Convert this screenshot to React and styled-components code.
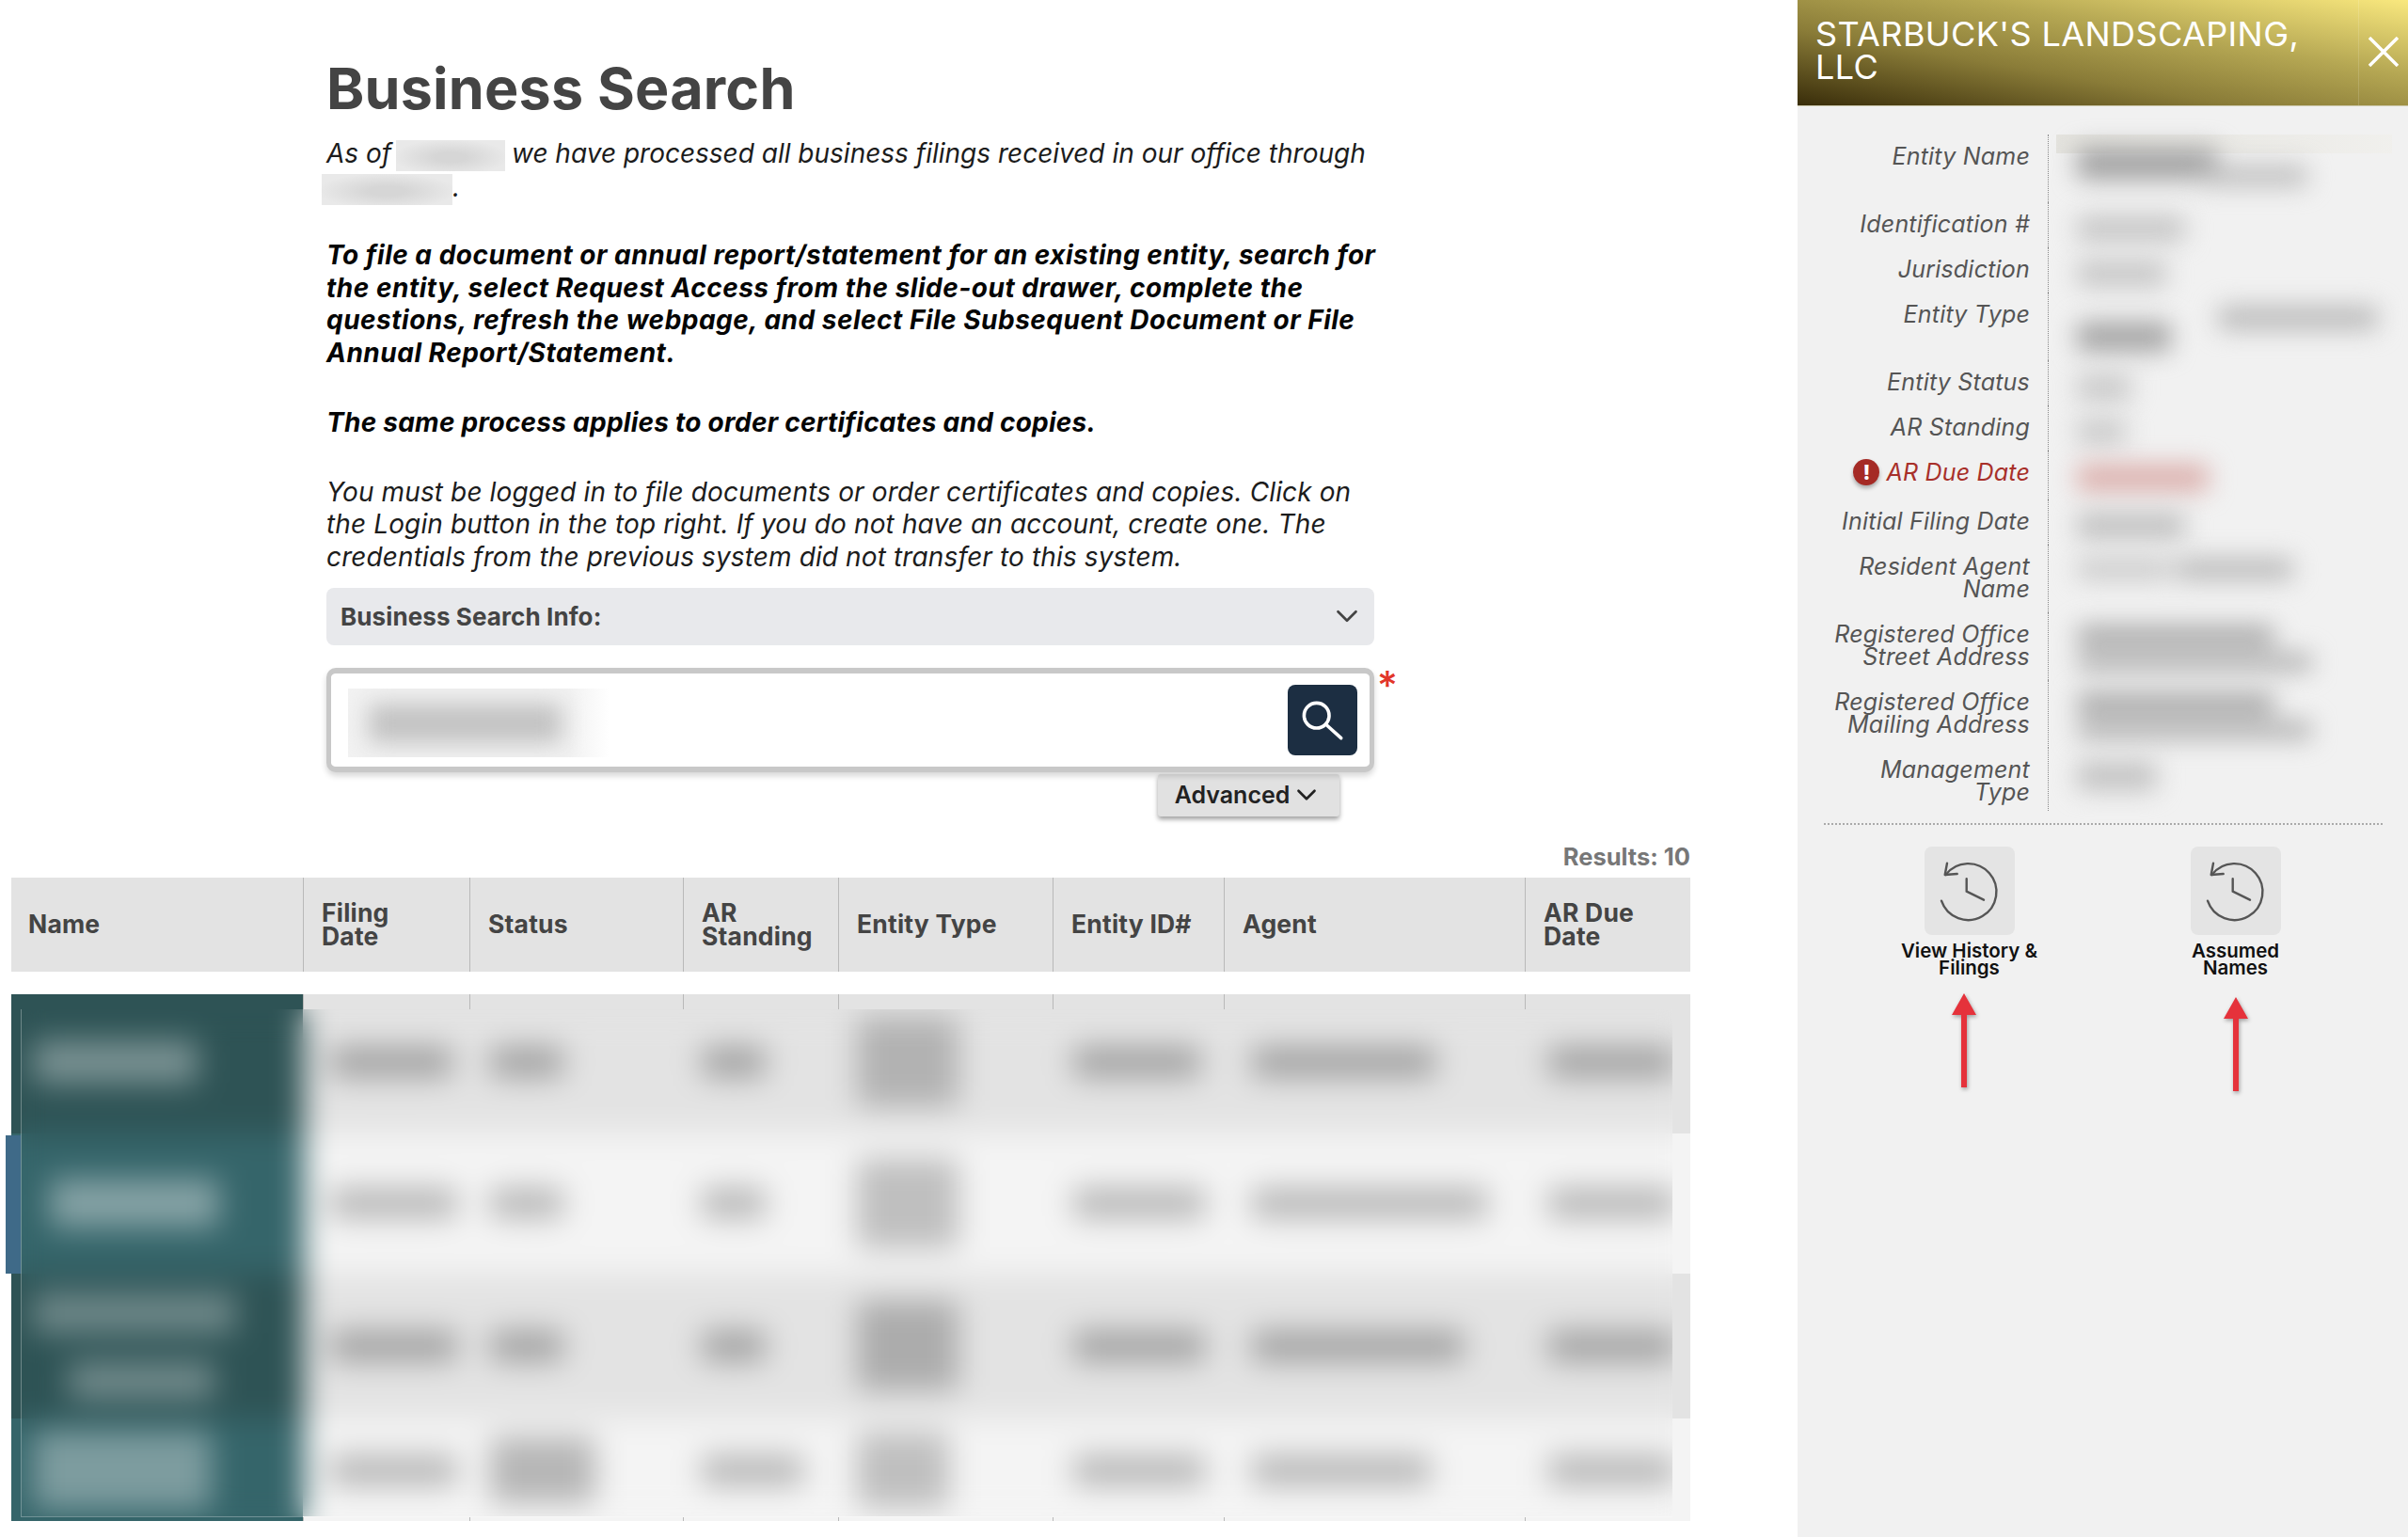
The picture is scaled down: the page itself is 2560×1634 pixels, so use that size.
import styled, { createGlobalStyle } from 'styled-components';
import { ChevronDown } from 'lucide-react';

const GlobalStyle = createGlobalStyle`
  html, body {
    margin: 0;
    padding: 0;
    background: #fff;
  }
  * {
    box-sizing: border-box;
  }
  body {
    font-family: Inter, "Open Sans", sans-serif;
  }
`;

const COLUMNS = '310px 177px 227px 165px 228px 182px 320px 176px';

const Page = styled.div`
  display: flex;
  width: 2560px;
  height: 1634px;
  overflow: hidden;
`;

const Main = styled.main`
  width: 1911px;
  flex: none;
  padding: 56px 0 0 12px;
`;

const Intro = styled.section`
  width: 1114px;
  margin-left: 335px;
`;

const Title = styled.h1`
  margin: 0 0 14px;
  font-size: 61px;
  line-height: 76px;
  font-weight: 650;
  letter-spacing: 0.2px;
  color: #444;
`;

const Para = styled.p`
  margin: 0 0 ${(p) => p.$gap || 39}px;
  font-size: 28px;
  line-height: 34.7px;
  font-style: italic;
  font-weight: ${(p) => (p.$bold ? 700 : 400)};
  letter-spacing: ${(p) => p.$spacing};
  color: ${(p) => (p.$bold ? '#050505' : '#1c1c1c')};
  white-space: nowrap;
`;

const Redacted = styled.span`
  display: inline-block;
  width: ${(p) => p.$w}px;
  height: 33px;
  margin: ${(p) => p.$margin};
  vertical-align: -9px;
  background: radial-gradient(ellipse at 50% 55%, #d6d6d6 20%, #e9e9e9 75%);
`;

const InfoBar = styled.div`
  display: flex;
  align-items: center;
  justify-content: space-between;
  height: 61px;
  margin-top: -24px;
  padding: 0 10px 0 15px;
  background: #e8e9ec;
  border-radius: 8px;
  font-size: 26px;
  font-weight: 700;
  letter-spacing: 0.1px;
  color: #444;
`;

const SearchRow = styled.div`
  position: relative;
  margin-top: 24px;
`;

const SearchBox = styled.div`
  display: flex;
  align-items: center;
  justify-content: space-between;
  height: 111px;
  padding: 0 13px 0 18px;
  background: #fff;
  border: 5px solid #c8c8c8;
  border-width: 6px 5px;
  border-radius: 10px;
  box-shadow: 0 4px 6px rgba(0, 0, 0, 0.16);
`;

const SearchValue = styled.div`
  width: 278px;
  height: 73px;
  margin-top: 6px;
  overflow: hidden;
  background: linear-gradient(90deg, #f2f2f2 85%, #fff);
`;

const SearchBlur = styled.div`
  width: 205px;
  height: 42px;
  margin: 16px 0 0 22px;
  background: #c2c2c2;
  filter: blur(12px);
`;

const SearchButton = styled.button`
  display: flex;
  width: 74px;
  height: 75px;
  padding: 0;
  border: 0;
  border-radius: 8px;
  background: #1c2e42;
`;

const Required = styled.span`
  position: absolute;
  top: -2px;
  left: 1117px;
  font-size: 42px;
  line-height: 42px;
  font-weight: 500;
  color: #e2352a;
`;

const AdvancedRow = styled.div`
  display: flex;
  justify-content: flex-end;
  margin: 2px 37px 0 0;
`;

const AdvancedButton = styled.div`
  display: flex;
  align-items: center;
  justify-content: center;
  gap: 1px;
  width: 193px;
  height: 45px;
  background: #e1e1e1;
  border-radius: 3px;
  box-shadow: 0 3px 5px rgba(0, 0, 0, 0.38);
  font-size: 25px;
  font-weight: 600;
  color: #222;
`;

const TableWrap = styled.section`
  width: 1785px;
  margin-top: 24px;
`;

const Results = styled.div`
  height: 40px;
  margin-bottom: 1px;
  text-align: right;
  font-size: 25.5px;
  line-height: 38px;
  font-weight: 700;
  color: #777;
`;

const HeadRow = styled.div`
  display: grid;
  grid-template-columns: ${COLUMNS};
  height: 100px;
  background: #e3e3e3;
`;

const HeadCell = styled.div`
  display: flex;
  align-items: center;
  padding-left: ${(p) => (p.$first ? 18 : 19)}px;
  border-left: ${(p) => (p.$first ? 0 : '1px solid #b9b9b9')};
  font-size: 26.5px;
  line-height: 25px;
  font-weight: 700;
  letter-spacing: 0.2px;
  color: #444;
`;

const HeadText = styled.span`
  max-width: ${(p) => (p.$wrap ? '130px' : 'none')};
`;

const Body = styled.div`
  position: relative;
  display: flex;
  flex-direction: column;
  height: 560px;
  margin-top: 24px;
  background:
    linear-gradient(180deg, #2e5355 0 148px, #35656a 148px 297px, #2e5355 297px 451px, #35656a 451px) left top / 310px 100% no-repeat,
    linear-gradient(180deg, #e3e3e3 0 148px, #f4f4f4 148px 297px, #e3e3e3 297px 451px, #f4f4f4 451px);
`;

const TickRow = styled.div`
  display: grid;
  flex: none;
  grid-template-columns: ${COLUMNS};
  height: ${(p) => p.$h}px;
`;

const Tick = styled.div`
  border-left: ${(p) => (p.$first ? 0 : '1px solid #b9b9b9')};
`;

const SelectedMark = styled.div`
  position: absolute;
  top: 150px;
  left: -6px;
  width: 16px;
  height: 147px;
  background: #3f6a88;
`;

const BlurClip = styled.div`
  flex: 1;
  min-height: 0;
  margin: 0 19px 0 10px;
  overflow: hidden;
  border-left: 1px solid rgba(255, 255, 255, 0.3);
  border-bottom: 1px solid rgba(255, 255, 255, 0.3);
`;

const BlurLayer = styled.div`
  margin-left: -10px;
  width: 1785px;
  filter: blur(16px);
`;

const DataRow = styled.div`
  display: grid;
  grid-template-columns: ${COLUMNS};
  height: ${(p) => p.$h}px;
  background: ${(p) => p.$bg};
`;

const DataCell = styled.div`
  display: flex;
  flex-direction: column;
  justify-content: center;
  align-items: flex-start;
  gap: 30px;
  padding: 0 0 ${(p) => p.$lift}px ${(p) => p.$pad}px;
  background: ${(p) => p.$bg || 'transparent'};
`;

const Smudge = styled.div`
  width: ${(p) => p.$w}px;
  height: ${(p) => p.$h}px;
  margin-left: ${(p) => p.$ml || 0}px;
  margin-top: ${(p) => p.$mt || 0}px;
  background: ${(p) => p.$c};
  border-radius: 6px;
`;

const Panel = styled.aside`
  width: 649px;
  flex: none;
  background: #f1f1f1;
`;

const PanelHeader = styled.header`
  display: flex;
  justify-content: space-between;
  height: 113px;
  padding: 19px 0 0 19px;
  background: linear-gradient(to top right, #392d0a 0%, #8a7c38 36%, #b5a753 64%, #f9e87e 100%);
  border-bottom: 1px solid #cfcbb0;
`;

const PanelTitle = styled.h2`
  margin: 0;
  font-size: 36px;
  line-height: 35px;
  font-weight: 400;
  letter-spacing: 0.4px;
  white-space: nowrap;
  color: #fff;
`;

const CloseButton = styled.div`
  display: flex;
  align-items: flex-start;
  justify-content: center;
  width: 53px;
  height: 112px;
  margin-top: -19px;
  padding-top: 39px;
  border-left: 1px solid rgba(255, 255, 255, 0.14);
`;

const DetailList = styled.dl`
  margin: 30px 17px 0 0;
`;

const DetailRow = styled.div`
  display: flex;
`;

const DetailLabel = styled.dt`
  display: flex;
  justify-content: flex-end;
  align-items: flex-start;
  gap: 7px;
  width: 267px;
  flex: none;
  padding: 11px 19px ${(p) => (p.$last ? 8 : p.$alert ? 15 : 13)}px 0;
  border-right: 1px dotted #888;
  text-align: right;
  font-size: 25px;
  line-height: 24px;
  font-style: italic;
  letter-spacing: 0.2px;
  white-space: nowrap;
  color: ${(p) => (p.$alert ? '#a8302a' : '#555')};
`;

const AlertDot = styled.span`
  display: flex;
  align-items: center;
  justify-content: center;
  width: 28px;
  height: 28px;
  margin-top: -2px;
  border-radius: 50%;
  background: #a52a25;
  box-shadow: 0 3px 4px rgba(0, 0, 0, 0.3);
  font-size: 22px;
  font-style: normal;
  font-weight: 800;
  color: #fff;
`;

const DetailValue = styled.dd`
  flex: 1;
  margin: 0 0 0 8px;
  padding: 14px 0 0 22px;
  background: ${(p) => (p.$tint ? 'linear-gradient(100deg, #e4e3de, rgba(240, 239, 234, 0.6)) top / 100% 20px no-repeat' : 'none')};
`;

const ValueBlur = styled.div`
  display: flex;
  flex-direction: column;
  gap: 7px;
  filter: blur(13px);
`;

const Divider = styled.div`
  margin: 13px 27px 0 28px;
  border-top: 2px dotted #aaa;
`;

const Actions = styled.div`
  display: grid;
  grid-template-columns: 283px 283px;
  margin: 23px 0 0 41px;
`;

const Action = styled.div`
  display: flex;
  flex-direction: column;
  align-items: center;
`;

const IconTile = styled.div`
  display: flex;
  width: 96px;
  height: 94px;
  background: #e4e4e4;
  border-radius: 8px;
`;

const ActionLabel = styled.div`
  margin-top: 8px;
  text-align: center;
  font-size: 20.5px;
  line-height: 18px;
  font-weight: 600;
  color: #111;
`;

const ArrowMark = styled.svg`
  margin: ${(p) => p.$top}px ${(p) => p.$shift}px 0 0;
  filter: drop-shadow(1px 2px 2px rgba(0, 0, 0, 0.35));
`;

const HEADERS = ['Name', 'Filing Date', 'Status', 'AR Standing', 'Entity Type', 'Entity ID#', 'Agent', 'AR Due Date'];

const ROWS = [
  {
    h: 132, lift: 20, bg: '#e3e3e3', teal: '#2e5355', tone: '#a0a0a0', typeTone: '#b2b2b2',
    name: [[175, 46, 12, 'rgba(255,255,255,.36)']],
    filing: 130, status: 78, standing: 68, type: 108, id: 135, agent: 195, due: 135,
  },
  {
    h: 149, lift: 0, bg: '#f4f4f4', teal: '#35656a', tone: '#b6b6b6', typeTone: '#bfbfbf',
    name: [[180, 52, 30, 'rgba(255,255,255,.4)']],
    filing: 135, status: 78, standing: 68, type: 108, id: 140, agent: 250, due: 135,
  },
  {
    h: 154, lift: 0, bg: '#e3e3e3', teal: '#2e5355', tone: '#a0a0a0', typeTone: '#acacac',
    name: [[215, 44, 12, 'rgba(255,255,255,.3)'], [155, 40, 50, 'rgba(255,255,255,.32)']],
    filing: 135, status: 78, standing: 68, type: 108, id: 140, agent: 225, due: 135,
  },
  {
    h: 110, lift: 0, bg: '#f4f4f4', teal: '#35656a', tone: '#b6b6b6', typeTone: '#bfbfbf',
    name: [[190, 84, 12, 'rgba(255,255,255,.36)']],
    filing: 135, status: 112, standing: 108, type: 98, id: 140, agent: 190, due: 135,
  },
];

const PADS = [0, 28, 21, 19, 19, 21, 29, 24];

// [width, height, colour, left offset, top offset]
const DETAILS = [
  { label: 'Entity Name', lines: [[150, 34, '#a2a2a2'], [115, 22, '#bebebe', 130, -22]], double: true, tint: true },
  { label: 'Identification #', lines: [[115, 28, '#c6c6c6']] },
  { label: 'Jurisdiction', lines: [[95, 28, '#c6c6c6']] },
  { label: 'Entity Type', lines: [[170, 26, '#bcbcbc', 150], [100, 32, '#a6a6a6', 0, -16]], double: true },
  { label: 'Entity Status', lines: [[58, 30, '#cacaca']] },
  { label: 'AR Standing', lines: [[52, 28, '#cacaca']] },
  { label: 'AR Due Date', lines: [[140, 30, '#dcb2af']], alert: true },
  { label: 'Initial Filing Date', lines: [[115, 28, '#c0c0c0']] },
  { label: ['Resident Agent', 'Name'], lines: [[100, 24, '#cccccc'], [125, 24, '#bcbcbc', 105, -31]] },
  { label: ['Registered Office', 'Street Address'], lines: [[210, 22, '#a8a8a8'], [250, 20, '#b2b2b2']] },
  { label: ['Registered Office', 'Mailing Address'], lines: [[210, 22, '#a4a4a4'], [250, 20, '#b2b2b2']] },
  { label: ['Management', 'Type'], lines: [[85, 32, '#c4c4c4']], last: true },
];

const HistoryIcon = () => (
  <svg width="96" height="94" viewBox="0 0 96 94" fill="none" stroke="#555" strokeWidth="2.4" strokeLinecap="round" strokeLinejoin="round">
    <path d="M18 57.7A30 30 0 1 0 22.5 30" />
    <path d="M24 17.7L21.7 30L34.7 29" />
    <path d="M44.7 34.3V47.7L63 56.7" />
  </svg>
);

const SearchGlyph = () => (
  <svg width="74" height="75" viewBox="0 0 74 75" fill="none" stroke="#fff" strokeWidth="3.6" strokeLinecap="round">
    <circle cx="30.7" cy="32.7" r="13.3" />
    <path d="M41 42.5L56.7 56.7" />
  </svg>
);

const Arrow = ({ top, shift }) => (
  <ArrowMark $top={top} $shift={shift} width="28" height="101" viewBox="0 0 28 101">
    <path d="M14 0L27 23H17V100H11V23H1Z" fill="#e5323b" />
  </ArrowMark>
);

const App = () => (
  <Page>
    <GlobalStyle />
    <Main>
      <Intro>
        <Title>Business Search</Title>
        <Para $spacing="0px" $gap={36}>
          As of <Redacted $w={116} $margin="0 -1px 0 -3px" /> we have processed all business filings received in our office through
          <br />
          <Redacted $w={139} $margin="0 0 0 -5px" />.
        </Para>
        <Para $bold $spacing="0.5px">
          To file a document or annual report/statement for an existing entity, search for
          <br />
          the entity, select Request Access from the slide-out drawer, complete the
          <br />
          questions, refresh the webpage, and select File Subsequent Document or File
          <br />
          Annual Report/Statement.
        </Para>
        <Para $bold $spacing="0.25px">The same process applies to order certificates and copies.</Para>
        <Para $spacing="0.12px">
          You must be logged in to file documents or order certificates and copies. Click on
          <br />
          the Login button in the top right. If you do not have an account, create one. The
          <br />
          credentials from the previous system did not transfer to this system.
        </Para>
        <InfoBar>
          Business Search Info:
          <ChevronDown size={38} color="#444" strokeWidth={1.7} />
        </InfoBar>
        <SearchRow>
          <SearchBox>
            <SearchValue>
              <SearchBlur />
            </SearchValue>
            <SearchButton aria-label="Search">
              <SearchGlyph />
            </SearchButton>
          </SearchBox>
          <Required>*</Required>
        </SearchRow>
        <AdvancedRow>
          <AdvancedButton>
            Advanced
            <ChevronDown size={34} strokeWidth={1.9} />
          </AdvancedButton>
        </AdvancedRow>
      </Intro>
      <TableWrap>
        <Results>Results: 10</Results>
        <HeadRow>
          {HEADERS.map((text, i) => (
            <HeadCell key={text} $first={i === 0}>
              <HeadText $wrap={i === 1 || i === 3 || i === 7}>{text}</HeadText>
            </HeadCell>
          ))}
        </HeadRow>
        <Body>
          <TickRow $h={16}>
            {PADS.map((_, i) => <Tick key={i} $first={i === 0} />)}
          </TickRow>
          <BlurClip>
            <BlurLayer>
              {ROWS.map((row, r) => (
                <DataRow key={row.h} $h={row.h} $bg={row.bg}>
                  <DataCell $lift={row.lift} $pad={0} $bg={row.teal}>
                    {row.name.map(([w, h, ml, c]) => (
                      <Smudge key={ml} $w={w} $h={h} $ml={ml + 10} $c={c} />
                    ))}
                  </DataCell>
                  {[row.filing, row.status, row.standing, row.type, row.id, row.agent, row.due].map((w, i) => {
                    const tall = r === 3 && i === 1;
                    const height = i === 3 ? Math.min(row.h - 30, 95) : tall ? 70 : 32;
                    return (
                      <DataCell key={i} $lift={row.lift} $pad={PADS[i + 1]}>
                        <Smudge $w={w} $h={height} $c={i === 3 ? row.typeTone : row.tone} />
                      </DataCell>
                    );
                  })}
                </DataRow>
              ))}
            </BlurLayer>
          </BlurClip>
          <TickRow $h={4}>
            {PADS.map((_, i) => <Tick key={i} $first={i === 0} />)}
          </TickRow>
          <SelectedMark />
        </Body>
      </TableWrap>
    </Main>
    <Panel>
      <PanelHeader>
        <PanelTitle>
          STARBUCK'S LANDSCAPING,
          <br />
          LLC
        </PanelTitle>
        <CloseButton>
          <svg width="32" height="32" viewBox="0 0 32 32" stroke="#fff" strokeWidth="3.4">
            <path d="M1 1L31 31M31 1L1 31" />
          </svg>
        </CloseButton>
      </PanelHeader>
      <DetailList>
        {DETAILS.map((item) => {
          const lines = Array.isArray(item.label) ? item.label : [item.label];
          return (
            <DetailRow key={lines.join(' ')}>
              <DetailLabel $alert={item.alert} $last={item.last}>
                {item.alert && <AlertDot>!</AlertDot>}
                <span>
                  {lines[0]}
                  {lines[1] && <br />}
                  {lines[1]}
                  {item.double && <br />}
                  {item.double && '\u00a0'}
                </span>
              </DetailLabel>
              <DetailValue $tint={item.tint}>
                <ValueBlur>
                  {item.lines.map(([w, h, c, ml, mt], i) => (
                    <Smudge key={i} $w={w} $h={h} $c={c} $ml={ml} $mt={mt} />
                  ))}
                </ValueBlur>
              </DetailValue>
            </DetailRow>
          );
        })}
      </DetailList>
      <Divider />
      <Actions>
        <Action>
          <IconTile>
            <HistoryIcon />
          </IconTile>
          <ActionLabel>
            View History &amp;
            <br />
            Filings
          </ActionLabel>
          <Arrow top={18} shift={12} />
        </Action>
        <Action>
          <IconTile>
            <HistoryIcon />
          </IconTile>
          <ActionLabel>
            Assumed
            <br />
            Names
          </ActionLabel>
          <Arrow top={22} shift={0} />
        </Action>
      </Actions>
    </Panel>
  </Page>
);

export default App;
